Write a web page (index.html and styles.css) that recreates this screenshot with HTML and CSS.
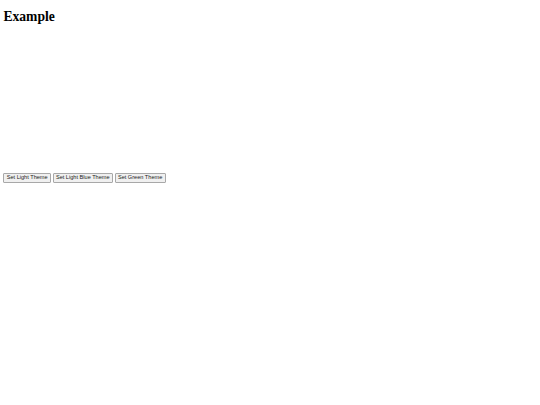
FILE: index.html
```html
<!DOCTYPE html>
<html>
<head>
<meta charset="utf-8">
<title>Example</title>
<link rel="stylesheet" href="styles.css">
</head>
<body>
<h1 class="title">Example</h1>
<div class="chart"></div>
<div class="theme-bar">
  <button class="theme-btn">Set Light Theme</button>
  <button class="theme-btn">Set Light Blue Theme</button>
  <button class="theme-btn">Set Green Theme</button>
</div>
</body>
</html>
```
FILE: styles.css
```css
html, body {
  background: #ffffff;
}
body {
  margin: 3.4px;
  font-family: "Liberation Serif", serif;
  color: #000;
}
.title {
  font-family: "Liberation Serif", serif;
  font-weight: bold;
  font-size: 13.6px;
  line-height: 15.5px;
  margin: 6px 0 9px;
}
.chart {
  height: 139px;
}
.theme-bar {
  display: flex;
  gap: 1.7px;
}
.theme-btn {
  font-family: "Liberation Sans", sans-serif;
  font-size: 5.6px;
  line-height: 7px;
  padding: 0 2.3px;
  margin: 0;
  height: 10px;
  color: #222;
  background: #f0f0f0;
  border: 1px solid #a8a8a8;
  border-radius: 1px;
}
```
